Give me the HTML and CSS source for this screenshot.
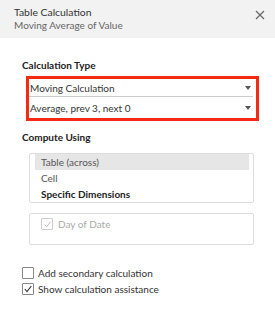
FILE: index.html
```html
<!DOCTYPE html>
<html>
<head>
<meta charset="utf-8">
<link rel="stylesheet" href="styles.css">
</head>
<body>
<div class="dialog">
  <div class="header">
    <div class="titles">
      <div class="title">Table Calculation</div>
      <div class="subtitle">Moving Average of Value</div>
    </div>
    <svg class="close" width="10" height="10" viewBox="0 0 10 10"><path d="M1 1L9 9M9 1L1 9" stroke="#666" stroke-width="1.2" fill="none"/></svg>
  </div>
  <div class="body">
    <div class="label">Calculation Type</div>
    <div class="highlight">
      <div class="select first"><span>Moving Calculation</span><span class="arrow"></span></div>
      <div class="select"><span>Average, prev 3, next 0</span><span class="arrow"></span></div>
    </div>
    <div class="label compute">Compute Using</div>
    <div class="listbox">
      <div class="item selected">Table (across)</div>
      <div class="item">Cell</div>
      <div class="item bold">Specific Dimensions</div>
    </div>
    <div class="dimbox">
      <div class="dim"><span class="cb disabled"><svg width="9" height="9" viewBox="0 0 9 9"><path d="M1.5 4.5L3.6 6.8L7.5 1.8" stroke="#bbb" stroke-width="1" fill="none"/></svg></span><span>Day of Date</span></div>
    </div>
    <div class="checks">
      <div class="check"><span class="cb"></span><span>Add secondary calculation</span></div>
      <div class="check"><span class="cb"><svg width="10" height="10" viewBox="0 0 10 10"><path d="M1.8 5L4 7.6L8.3 2" stroke="#333" stroke-width="1.1" fill="none"/></svg></span><span>Show calculation assistance</span></div>
    </div>
  </div>
</div>
</body>
</html>
```
FILE: styles.css
```css
html, body {
  margin: 0;
  padding: 0;
  background: #fff;
}
body {
  font-family: "Lato", "Liberation Sans", sans-serif;
  font-size: 10px;
  color: #333;
  width: 275px;
}
.header {
  background: #f2f2f2;
  height: 38px;
  box-sizing: border-box;
  padding: 6px 10px 0 14px;
  display: flex;
  justify-content: space-between;
  align-items: flex-start;
}
.title {
  font-size: 10.4px;
  line-height: 13px;
  color: #333;
}
.subtitle {
  line-height: 13px;
  color: #666;
}
.close {
  margin-top: 4px;
}
.body {
  padding: 0 0 0 22px;
}
.label {
  font-weight: bold;
  line-height: 14px;
  margin-top: 20px;
  color: #222;
}
.highlight {
  margin-top: 4px;
  margin-left: 4px;
  width: 233px;
  box-sizing: border-box;
  border: 3px solid #f52a14;
  padding: 0 3px 0 0;
}
.select {
  display: flex;
  justify-content: space-between;
  align-items: center;
  height: 19px;
  padding: 0 1px 0 1px;
  color: #333;
}
.select.first {
  height: 17px;
  border-bottom: 1px solid #ccc;
}
.select.first + .select {
  height: 21px;
}
.arrow {
  width: 0;
  height: 0;
  border-left: 3px solid transparent;
  border-right: 3px solid transparent;
  border-top: 4px solid #555;
  margin-right: 1px;
}
.compute {
  margin-top: 9px;
}
.listbox {
  margin-top: 9px;
  margin-left: 7px;
  width: 225px;
  box-sizing: border-box;
  border: 1px solid #ddd;
  border-radius: 2px;
  padding: 0 4px 0 5px;
  height: 50px;
}
.item {
  height: 16px;
  line-height: 16px;
  padding-left: 6px;
  color: #555;
}
.item.selected {
  background: #e6e6e6;
}
.item.bold {
  font-weight: bold;
  color: #222;
}
.dimbox {
  margin-top: 10px;
  margin-left: 7px;
  width: 225px;
  height: 32px;
  box-sizing: border-box;
  border: 1px solid #ddd;
  border-radius: 2px;
  padding: 2px 0 0 11px;
}
.dim {
  display: flex;
  align-items: center;
  gap: 5px;
  height: 16px;
  color: #aaa;
}
.cb {
  width: 12px;
  height: 12px;
  box-sizing: border-box;
  border: 1px solid #888;
  border-radius: 1px;
  display: flex;
  align-items: center;
  justify-content: center;
  flex: none;
}
.cb.disabled {
  border-color: #ccc;
}
.checks {
  margin-top: 20px;
  display: flex;
  flex-direction: column;
}
.check {
  display: flex;
  align-items: center;
  gap: 4px;
  height: 16px;
  color: #333;
}
```
